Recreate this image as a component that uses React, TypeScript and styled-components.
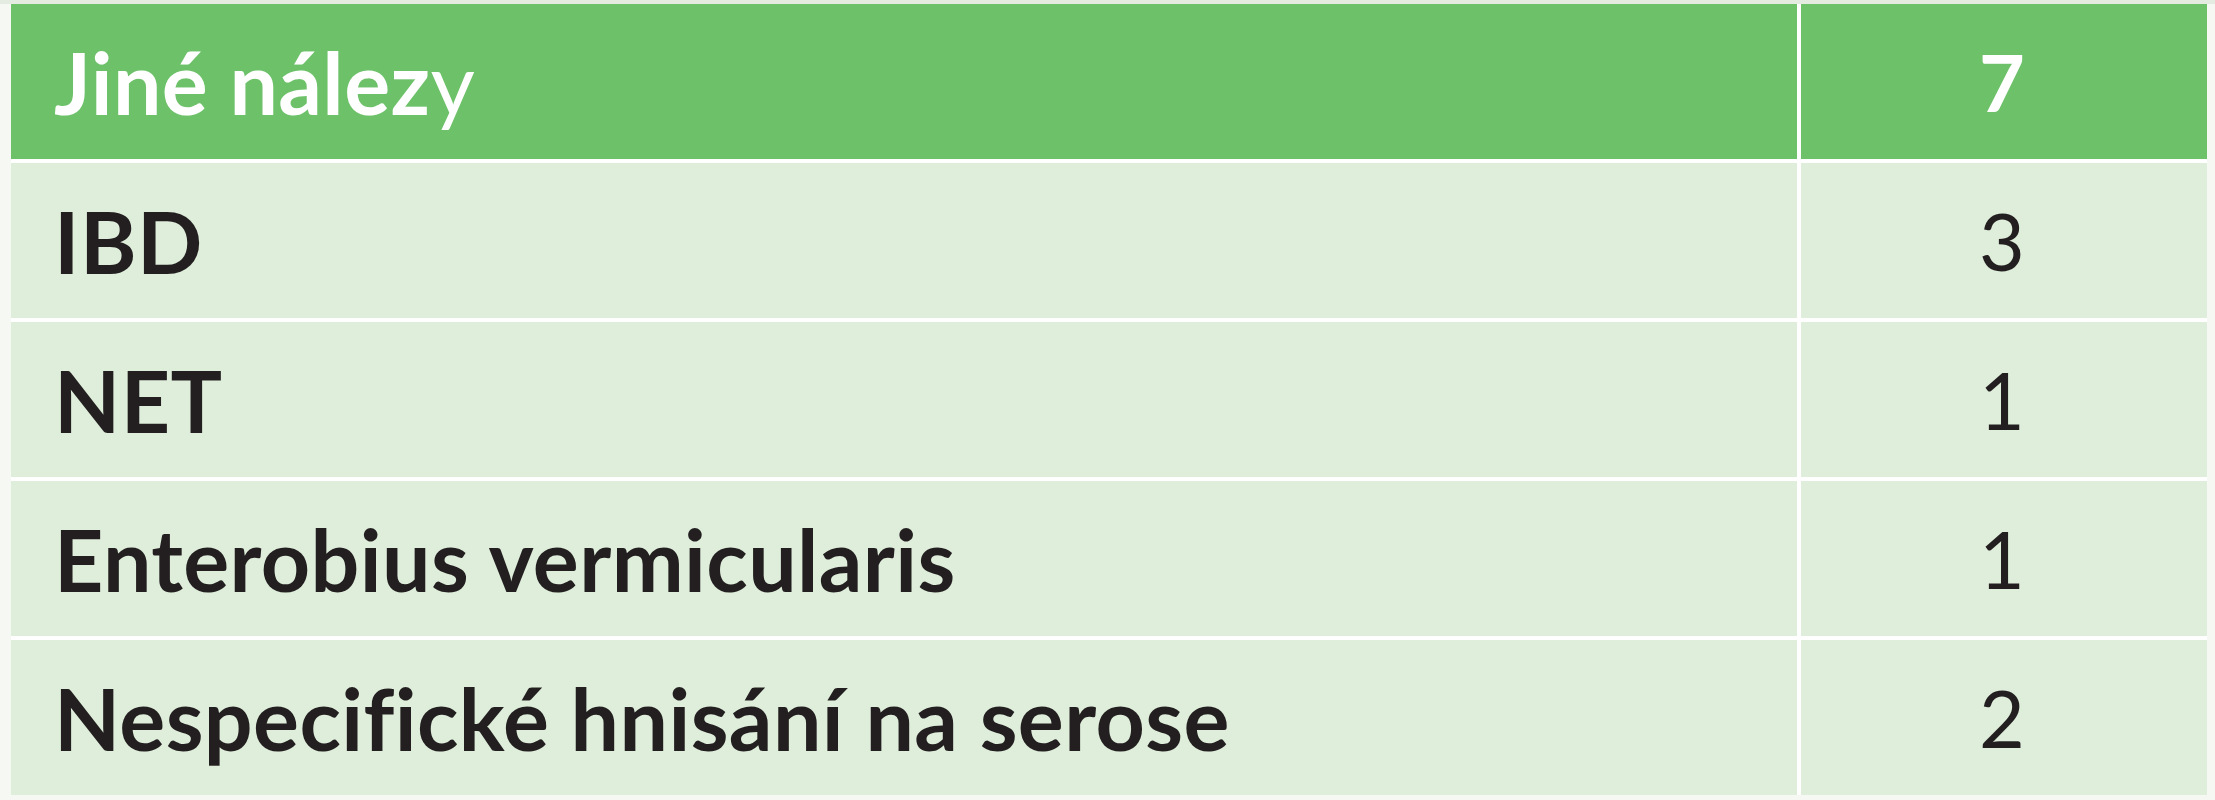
import React from "react";
import styled, { createGlobalStyle } from "styled-components";

const Global = createGlobalStyle`
  html, body { margin: 0; background: #f5f8f3; }
  #root { width: 2215px; height: 800px; }
`;

const Page = styled.div`
  box-sizing: border-box;
  width: 2215px;
  height: 800px;
  padding: 4px 8px 4px 11px;
  background: linear-gradient(#e4ece1 0 4px, #f5f8f3 4px);
`;

const Table = styled.div`
  display: grid;
  grid-template-columns: 1786px 406px;
  grid-auto-rows: 155px;
  gap: 4px;
  background: #ffffff;
`;

const Cell = styled.div<{ $head?: boolean; $num?: boolean }>`
  display: flex;
  align-items: center;
  justify-content: ${({ $num }) => ($num ? "center" : "flex-start")};
  padding: ${({ $num }) => ($num ? "0 4px 0 0" : "0 0 0 43px")};
  background: ${({ $head }) => ($head ? "#6cc169" : "#dfeedb")};
  color: ${({ $head }) => ($head ? "#ffffff" : "#231f20")};
  font-family: Lato, "Open Sans", "Liberation Sans", sans-serif;
  font-weight: ${({ $head, $num }) => ($num && !$head ? 400 : 700)};
  font-size: ${({ $num }) => ($num ? "79px" : "86px")};
  letter-spacing: ${({ $num }) => ($num ? "0" : "0.4px")};
  line-height: 1;
  white-space: nowrap;
`;

const Light = styled.span`
  font-weight: 400;
`;

const rows: [string, string][] = [
  ["IBD", "3"],
  ["NET", "1"],
  ["Enterobius vermicularis", "1"],
  ["Nespecifické hnisání na serose", "2"],
];

export default function App() {
  return (
    <Page>
      <Global />
      <Table>
        <Cell $head>
          Jiné nález<Light>y</Light>
        </Cell>
        <Cell $head $num>7</Cell>
        {rows.map(([label, n]) => (
          <React.Fragment key={label}>
            <Cell>{label}</Cell>
            <Cell $num>{n}</Cell>
          </React.Fragment>
        ))}
      </Table>
    </Page>
  );
}
